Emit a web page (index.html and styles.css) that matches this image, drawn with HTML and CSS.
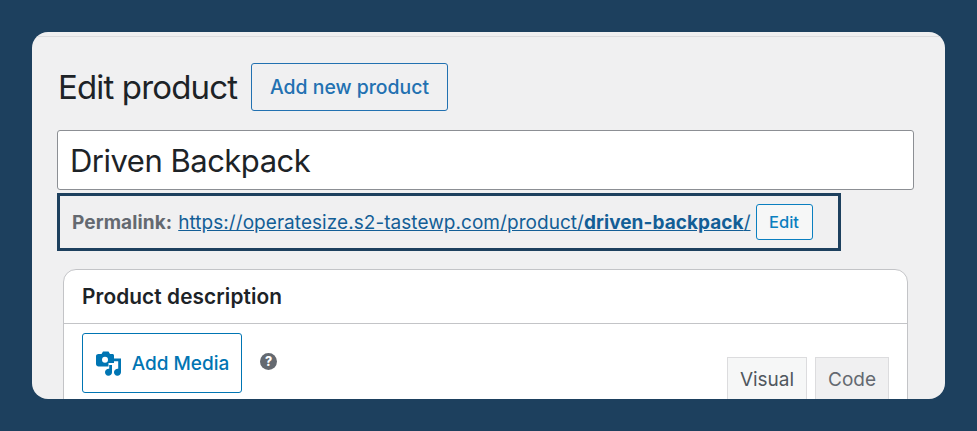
FILE: index.html
```html
<!DOCTYPE html>
<html lang="en">
<head>
<meta charset="utf-8">
<title>Edit product</title>
<link rel="stylesheet" href="styles.css">
</head>
<body>
<main class="panel">
  <div class="heading">
    <h1 class="title">Edit product</h1>
    <a class="add-new" href="#">Add new product</a>
  </div>
  <div class="name-field">Driven Backpack</div>
  <div class="permalink">
    <strong class="permalink-label">Permalink:</strong>
    <a class="permalink-url" href="#">https://operatesize.s2-tastewp.com/product/<b>driven-backpack</b>/</a>
    <button class="edit-slug" type="button">Edit</button>
  </div>
  <section class="card">
    <h2 class="card-title">Product description</h2>
    <div class="editor-bar">
      <button class="add-media" type="button">
        <svg class="media-icon" viewBox="0 0 25 25" aria-hidden="true">
          <path d="M2.500 3h3L7 .5h5.500L14 3h2.500c.8 0 1.500.7 1.500 1.500V12h-5.500v3.500h-10C1.200 15.500 0 14.300 0 13v-8C0 3.700 1.200 3 2.500 3z" fill="#0075b3"/>
          <circle cx="9" cy="8.800" r="3" fill="#fff"/>
          <path d="M13.200 14H16V21.200a3.500 3.500 0 1 1-2.800-3.400z" fill="#0075b3"/>
          <path d="M18 7.500h7v13.700a3.500 3.500 0 1 1-2.800-3.400V10.300H18z" fill="#0075b3"/>
        </svg>
        <span>Add Media</span>
      </button>
      <span class="help" aria-label="Help">?</span>
      <div class="tabs">
        <span class="tab tab-visual">Visual</span>
        <span class="tab tab-code">Code</span>
      </div>
    </div>
  </section>
</main>
</body>
</html>
```
FILE: styles.css
```css
* { box-sizing: border-box; }
html, body { margin: 0; height: 100%; }
body {
  background: #1d405e;
  padding: 32px;
  overflow: hidden;
  font-family: Inter, "Liberation Sans", sans-serif;
}
.panel {
  width: 913px;
  height: 367px;
  background: #f0f0f1;
  border-radius: 16px;
  overflow: hidden;
  padding: 4px 31px 0 25px;
}
.panel::before {
  content: "";
  display: block;
  height: 1px;
  margin: 0 -31px 26px -25px;
  background: #dcdcde;
}
.heading {
  display: flex;
  align-items: center;
  gap: 13px;
}
.title {
  margin: 0 0 0 1px;
  width: 180px;
  white-space: nowrap;
  font-size: 33px;
  font-weight: 400;
  letter-spacing: -.85px;
  color: #1d2327;
}
.add-new {
  display: flex;
  align-items: center;
  justify-content: center;
  width: 197px;
  height: 48px;
  border: 1px solid #2271b1;
  border-radius: 3px;
  color: #2271b1;
  font-size: 19.400px;
  font-weight: 500;
  text-decoration: none;
}
.name-field {
  margin-top: 19px;
  height: 60px;
  display: flex;
  align-items: center;
  padding-left: 12px;
  width: 857px;
  background: #fff;
  border: 1px solid #8c8f94;
  border-radius: 3px;
  font-size: 31px;
  letter-spacing: -.5px;
  color: #1d2327;
}
.permalink {
  margin-top: 3px;
  width: 784px;
  height: 58px;
  display: flex;
  align-items: center;
  gap: 6px;
  padding-left: 12px;
  border: 3px solid #1d405e;
  font-size: 19px;
}
.permalink-label { color: #646970; font-weight: 700; letter-spacing: .1px; }
.permalink-url { color: #135e96; letter-spacing: .05px; }
.edit-slug {
  width: 57px;
  height: 36px;
  margin-left: -1px;
  padding: 0;
  background: #f6f7f7;
  border: 1px solid #0a7fc0;
  border-radius: 3px;
  color: #0a7fc0;
  font: 500 16.500px Inter, "Liberation Sans", sans-serif;
}
.card {
  margin: 18px 6px 0 6px;
  width: 845px;
  background: #fff;
  border: 1px solid #c3c4c7;
  border-radius: 13px 13px 0 0;
  height: 140px;
}
.card-title {
  margin: 0;
  height: 54px;
  display: flex;
  align-items: center;
  padding-left: 18px;
  border-bottom: 1px solid #c3c4c7;
  font-size: 20.800px;
  font-weight: 600;
  letter-spacing: .1px;
  color: #1d2327;
}
.editor-bar {
  display: flex;
  align-items: flex-start;
  padding: 9px 18px 0 18px;
}
.add-media {
  width: 160px;
  height: 60px;
  display: flex;
  align-items: center;
  justify-content: center;
  gap: 11px;
  padding: 0 0 0 1px;
  background: #fff;
  border: 1px solid #0075b3;
  border-radius: 3px;
  color: #0075b3;
  font: 500 19px Inter, "Liberation Sans", sans-serif;
}
.media-icon { width: 25px; height: 25px; flex: none; }
.help {
  margin: 20px 0 0 18px;
  width: 17px;
  height: 17px;
  border-radius: 50%;
  background: #646970;
  color: #fff;
  font-size: 12.500px;
  font-weight: 800;
  display: flex;
  align-items: center;
  justify-content: center;
}
.tabs {
  margin: 24px 0 0 auto;
  display: flex;
  gap: 8px;
}
.tab {
  height: 60px;
  padding-top: 10px;
  border: 1px solid #dcdcde;
  font-size: 19px;
  text-align: center;
}
.tab-visual { width: 80px; background: #f6f7f7; color: #50575e; }
.tab-code { width: 74px; background: #f0f0f1; color: #646970; }
```
